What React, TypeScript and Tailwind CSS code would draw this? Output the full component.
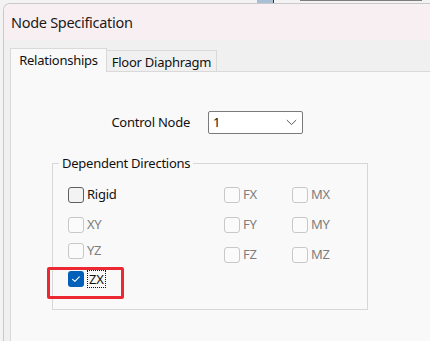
import React from "react";

function Box({ state }: { state: "enabled" | "disabled" | "checked" }) {
  if (state === "checked") {
    return (
      <div className="w-[16px] h-[16px] rounded-[3px] bg-[#005fb8] flex items-center justify-center shrink-0">
        <svg width="16" height="16" viewBox="0 0 16 16">
          <path d="M4.6 8.3 L6.9 10.4 L11.3 5.8" fill="none" stroke="#ffffff" strokeWidth="1.1" strokeLinecap="round" strokeLinejoin="round" />
        </svg>
      </div>
    );
  }
  if (state === "enabled") {
    return <div className="w-[16px] h-[16px] rounded-[3px] border border-[#5f5f5f] bg-[#f3f3f3] shrink-0" />;
  }
  return <div className="w-[16px] h-[16px] rounded-[3px] border border-[#c8c8c8] bg-[#fbfbfb] shrink-0" />;
}

function Check({
  label,
  state,
  className = "",
}: {
  label: string;
  state: "enabled" | "disabled" | "checked";
  className?: string;
}) {
  return (
    <div className={"flex items-center h-[16px] gap-[3px] " + className}>
      <Box state={state} />
      {state === "checked" ? (
        <span className="h-[18px] leading-[16px] px-[1px] border border-dotted border-[#111] text-[#111]">{label}</span>
      ) : (
        <span className={state === "enabled" ? "text-[#111]" : "text-[#7d7d7d]"}>{label}</span>
      )}
    </div>
  );
}

export default function App() {
  return (
    <div className="w-[430px] h-[341px] overflow-hidden bg-[#f3f3f3] flex flex-col font-['Noto_Sans',sans-serif] text-[13px] tracking-[-0.25px] relative">
      {/* desktop strip above the window */}
      <div className="h-[3px] flex shrink-0">
        <div className="ml-[257px] w-[16px] h-[3px] bg-[#a9bfd6]" />
        <div className="w-[1px] h-[3px] bg-[#2a3a4a]" />
        <div className="ml-[26px] w-[122px] h-[1px] bg-[#7d7d7d]" />
      </div>
      <div className="flex flex-1 min-h-0">
        <div className="w-[3px] shrink-0" />
        {/* window */}
        <div className="flex-1 flex flex-col rounded-tl-[7px] border-l border-t border-[#c9c9c9] bg-[#f0f0f0] overflow-hidden">
          {/* title bar */}
          <div className="h-[36px] bg-[#f8eff2] flex items-center pl-[7px] shrink-0">
            <span className="text-[14.5px] tracking-[-0.3px] text-[#1b1b1b] leading-none mt-[1px]">Node Specification</span>
          </div>
          {/* tabs */}
          <div className="flex items-end pl-[6px] pt-[8px] shrink-0">
            <div className="relative z-10 w-[97px] h-[24px] mb-[-1px] bg-[#f9f9f9] border-t border-l border-r border-[#d9d9d9] flex items-start justify-center pt-[2px] text-[#111]">
              Relationships
            </div>
            <div className="w-[110px] h-[21px] bg-[#f0f0f0] border-t border-r border-[#d9d9d9] flex items-start justify-center pt-[2px] text-[#111]">
              Floor Diaphragm
            </div>
          </div>
          {/* panel */}
          <div className="flex-1 bg-[#f9f9f9] border-t border-l border-[#d9d9d9] ml-[6px] flex flex-col">
            {/* control node row */}
            <div className="flex items-center mt-[39px] h-[23px]">
              <div className="w-[179px] text-right text-[#111]">Control Node</div>
              <div className="ml-[18px] w-[95px] h-[23px] bg-white border border-[#7a7a7a] rounded-[2px] flex items-center justify-between pl-[4px] pr-[5px]">
                <span className="text-[#111]">1</span>
                <svg width="11" height="7" viewBox="0 0 11 7">
                  <path d="M0.8 1 L5.5 5.6 L10.2 1" fill="none" stroke="#5a5a5a" strokeWidth="1" />
                </svg>
              </div>
            </div>
            {/* group box */}
            <fieldset className="ml-[41px] mt-[20px] w-[316px] h-[156px] border border-[#d7d7d7] p-0 m-0 min-w-0">
              <legend className="ml-[6px] px-[3px] leading-[18px] text-[#111]">Dependent Directions</legend>
              <div className="flex pl-[15px] pt-[15px]">
                <div className="w-[156px] flex flex-col">
                  <Check label="Rigid" state="enabled" />
                  <Check label="XY" state="disabled" className="mt-[14px]" />
                  <Check label="YZ" state="disabled" className="mt-[10px]" />
                  <Check label="ZX" state="checked" className="mt-[12px]" />
                </div>
                <div className="w-[68px] flex flex-col">
                  <Check label="FX" state="disabled" />
                  <Check label="FY" state="disabled" className="mt-[14px]" />
                  <Check label="FZ" state="disabled" className="mt-[14px]" />
                </div>
                <div className="flex flex-col">
                  <Check label="MX" state="disabled" />
                  <Check label="MY" state="disabled" className="mt-[14px]" />
                  <Check label="MZ" state="disabled" className="mt-[14px]" />
                </div>
              </div>
            </fieldset>
          </div>
        </div>
      </div>
      {/* red highlight annotation */}
      <div className="absolute left-[47px] top-[267px] w-[77px] h-[32px] border-[3px] border-[#ec2832] rounded-[2px]" />
    </div>
  );
}
